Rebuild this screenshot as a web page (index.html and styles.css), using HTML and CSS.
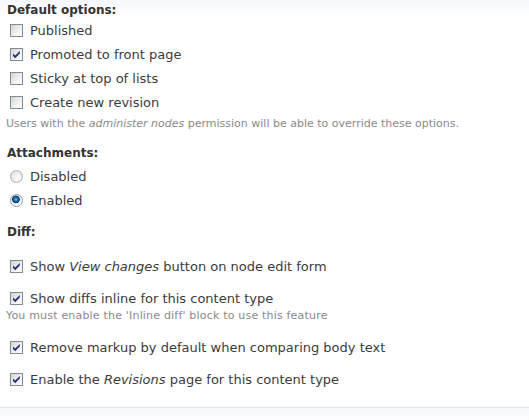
FILE: index.html
```html
<!DOCTYPE html>
<html lang="en">
<head>
  <meta charset="UTF-8">
  <title>Content type options</title>
  <link rel="stylesheet" href="styles.css">
</head>
<body>
  <div class="form">
    <div class="group defaults">
      <h3>Default options:</h3>
      <div class="option"><span class="check"></span>Published</div>
      <div class="option"><span class="check on"><svg viewBox="0 0 11 11"><path d="M2 4.4 L4.2 6.6 L8.8 2 L8.8 4.6 L4.2 9.2 L2 7 Z"/></svg></span>Promoted to front page</div>
      <div class="option"><span class="check"></span>Sticky at top of lists</div>
      <div class="option"><span class="check"></span>Create new revision</div>
      <div class="description">Users with the <em>administer nodes</em> permission will be able to override these options.</div>
    </div>

    <div class="group attachments">
      <h3>Attachments:</h3>
      <div class="option"><span class="radio"></span>Disabled</div>
      <div class="option"><span class="radio on"></span>Enabled</div>
    </div>

    <div class="group diff">
      <h3>Diff:</h3>
      <div class="item">
        <div class="option"><span class="check on"><svg viewBox="0 0 11 11"><path d="M2 4.4 L4.2 6.6 L8.8 2 L8.8 4.6 L4.2 9.2 L2 7 Z"/></svg></span>Show <em>View changes</em> button on node edit form</div>
      </div>
      <div class="item">
        <div class="option"><span class="check on"><svg viewBox="0 0 11 11"><path d="M2 4.4 L4.2 6.6 L8.8 2 L8.8 4.6 L4.2 9.2 L2 7 Z"/></svg></span>Show diffs inline for this content type</div>
        <div class="description">You must enable the 'Inline diff' block to use this feature</div>
      </div>
      <div class="item">
        <div class="option"><span class="check on"><svg viewBox="0 0 11 11"><path d="M2 4.4 L4.2 6.6 L8.8 2 L8.8 4.6 L4.2 9.2 L2 7 Z"/></svg></span>Remove markup by default when comparing body text</div>
      </div>
      <div class="item">
        <div class="option"><span class="check on"><svg viewBox="0 0 11 11"><path d="M2 4.4 L4.2 6.6 L8.8 2 L8.8 4.6 L4.2 9.2 L2 7 Z"/></svg></span>Enable the <em>Revisions</em> page for this content type</div>
      </div>
    </div>
  </div>
</body>
</html>
```

FILE: styles.css
```css
body {
  margin: 0;
  font-family: "DejaVu Sans", Verdana, sans-serif;
  font-size: 13px;
  color: #3b3b3b;
  background: linear-gradient(#f6f7fc, #fff 16px);
}
.form {
  box-sizing: border-box;
  height: 408px;
  padding: 2px 0 0 7px;
  border-bottom: 1px solid #d8e5ee;
}
h3 {
  margin: 0;
  font-size: 12px;
  line-height: 16px;
  color: #333;
}
.option {
  height: 24px;
  line-height: 24px;
  padding-left: 3px;
  white-space: nowrap;
}
.check,
.radio {
  display: inline-block;
  box-sizing: border-box;
  width: 13px;
  height: 13px;
  margin-right: 7px;
  vertical-align: -2px;
}
.check {
  border: 1px solid #7f8a9c;
  background: linear-gradient(135deg, #d6d6d0, #f3f3ef 65%, #fff);
}
.check svg {
  display: block;
  width: 11px;
  height: 11px;
  fill: #26317e;
}
.radio {
  border-radius: 50%;
  border: 1px solid #a9b0b8;
  background: radial-gradient(circle at 60% 60%, #fff, #d8d8d4);
}
.radio.on {
  border-color: #8a98a8;
  background: radial-gradient(circle at 45% 40%, #6cc0e8 0, #1e6aa0 2px, #0c3c66 3.5px, #e6e9ee 4.2px, #fff 6px);
}
.description {
  font-size: 11px;
  line-height: 14px;
  color: #8a8a8a;
  margin-left: -1px;
}
.defaults h3 {
  margin-bottom: 1px;
}
.defaults .description {
  margin-top: 2px;
}
.attachments {
  margin-top: 14px;
}
.attachments h3 {
  margin-bottom: 4px;
}
.diff {
  margin-top: 11px;
}
.diff h3 {
  margin-bottom: 17px;
}
.diff .option {
  height: 20px;
  line-height: 20px;
}
.item {
  margin-bottom: 12px;
}
.item .description {
  padding-bottom: 3px;
  letter-spacing: 0.19px;
}
```
